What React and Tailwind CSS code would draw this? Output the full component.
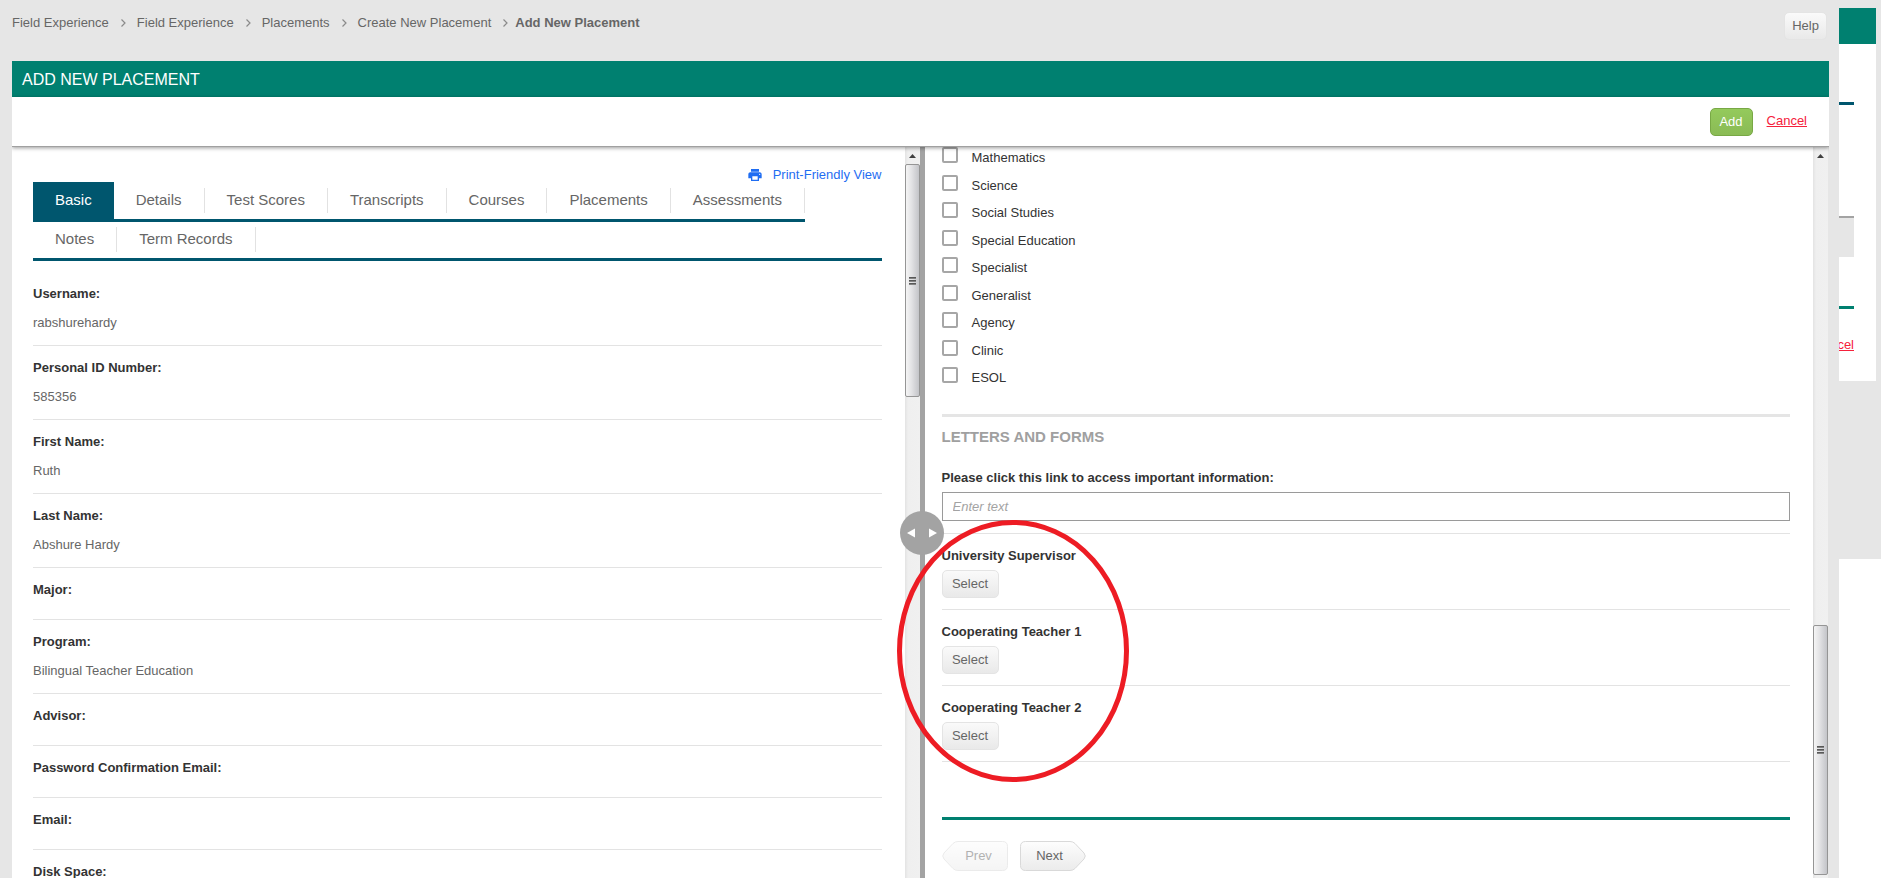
import React, { useState } from 'react'
import { MdPrint } from 'react-icons/md'

const crumbs = ['Field Experience', 'Field Experience', 'Placements', 'Create New Placement']

const tabRows = [
  ['Basic', 'Details', 'Test Scores', 'Transcripts', 'Courses', 'Placements', 'Assessments'],
  ['Notes', 'Term Records'],
]

const fields = [
  { label: 'Username:', value: 'rabshurehardy' },
  { label: 'Personal ID Number:', value: '585356' },
  { label: 'First Name:', value: 'Ruth' },
  { label: 'Last Name:', value: 'Abshure Hardy' },
  { label: 'Major:' },
  { label: 'Program:', value: 'Bilingual Teacher Education' },
  { label: 'Advisor:' },
  { label: 'Password Confirmation Email:' },
  { label: 'Email:' },
  { label: 'Disk Space:' },
]

const subjects = [
  'Mathematics',
  'Science',
  'Social Studies',
  'Special Education',
  'Specialist',
  'Generalist',
  'Agency',
  'Clinic',
  'ESOL',
]

const people = ['University Supervisor', 'Cooperating Teacher 1', 'Cooperating Teacher 2']

function Chevron() {
  return (
    <svg width="5" height="8" viewBox="0 0 5 8" fill="none" stroke="#8a8a8a" strokeWidth="1.2">
      <path d="M0.5 0.5 L4 4 L0.5 7.5" />
    </svg>
  )
}

function Breadcrumbs() {
  return (
    <nav className="flex items-center text-[#666]">
      {crumbs.map((crumb, i) => (
        <React.Fragment key={i}>
          <a href="#">{crumb}</a>
          <span className={i === crumbs.length - 1 ? 'pl-3 pr-[7px]' : 'pl-3 pr-[11px]'}>
            <Chevron />
          </span>
        </React.Fragment>
      ))}
      <span className="font-bold">Add New Placement</span>
    </nav>
  )
}

function GrayButton({ children, className = '', ...props }) {
  return (
    <button
      className={`h-7 rounded-[5px] border border-[#e4e4e4] bg-linear-to-b from-[#fafafa] to-[#e9e9e9] text-[#666] ${className}`}
      {...props}
    >
      {children}
    </button>
  )
}

function ScrollTrack({ thumb }) {
  return (
    <div className="w-[15px] shrink-0 h-full flex flex-col bg-linear-to-r from-[#e3e3e3] via-[#efefef] via-20% to-[#f0f0f0]">
      <div className="h-[17px] shrink-0 flex items-center justify-center">
        <svg width="7" height="4" viewBox="0 0 7 4" fill="#404040">
          <path d="M3.5 0 L7 4 L0 4 Z" />
        </svg>
      </div>
      <div
        className={`${thumb} flex flex-col items-center justify-center gap-px rounded-xs border border-[#959595] bg-linear-to-r from-[#f5f5f5] via-[#e4e4e6] via-40% to-[#c3c4c8]`}
      >
        <span className="w-[7px] h-0.5 bg-linear-to-b from-[#444] to-[#999]" />
        <span className="w-[7px] h-0.5 bg-linear-to-b from-[#444] to-[#999]" />
        <span className="w-[7px] h-0.5 bg-linear-to-b from-[#444] to-[#999]" />
      </div>
    </div>
  )
}

function Tabs() {
  const [active, setActive] = useState('Basic')

  return (
    <div>
      {tabRows.map((row, i) => (
        <div
          key={i}
          className={`flex items-end border-b-3 border-[#00566e] text-[15px] ${i === 0 ? 'w-fit h-10' : 'h-[39px]'}`}
        >
          {row.map((tab) => (
            <button
              key={tab}
              onClick={() => setActive(tab)}
              className={
                tab === active
                  ? 'h-full px-[22px] bg-[#00566e] text-white'
                  : 'h-[25px] mb-1.5 px-[22px] border-r border-[#e2e2e2] text-[#666]'
              }
            >
              {tab}
            </button>
          ))}
        </div>
      ))}
    </div>
  )
}

function StudentPanel() {
  return (
    <section className="w-[calc(50%-1px)] flex bg-white">
      <div className="flex-1 overflow-hidden pl-[21px] pr-[23px] pt-5">
        <a href="#" className="h-[15px] flex items-center justify-end gap-2.5 leading-5 text-[#1f6df2]">
          <MdPrint className="size-4" />
          Print-Friendly View
        </a>
        <Tabs />
        <dl className="pt-[11px]">
          {fields.map((field) => (
            <div
              key={field.label}
              className={`pt-3 border-b border-[#e3e3e3] ${field.value ? 'pb-3' : 'pb-[19px]'}`}
            >
              <dt className="font-bold text-[#333] leading-5">{field.label}</dt>
              {field.value && <dd className="mt-[9px] text-[#666] leading-5">{field.value}</dd>}
            </div>
          ))}
        </dl>
      </div>
      <ScrollTrack thumb="h-[233px]" />
    </section>
  )
}

function StepButton({ direction, disabled }) {
  const prev = direction === 'prev'
  return (
    <button
      disabled={disabled}
      className={`relative w-[66px] h-[30px] text-[#666] ${disabled ? 'opacity-50' : ''} ${prev ? 'pl-2' : 'pr-1.5'}`}
    >
      <svg
        className={`absolute inset-0 ${prev ? '-scale-x-100' : ''}`}
        width="66"
        height="30"
        viewBox="0 0 66 30"
      >
        <defs>
          <linearGradient id={`step-${direction}`} x1="0" y1="0" x2="0" y2="1">
            <stop offset="0" stopColor="#fdfdfd" />
            <stop offset="1" stopColor="#ebebeb" />
          </linearGradient>
        </defs>
        <path
          d="M5.5 0.5 H50 Q53 0.5 55 2.5 L64 12 Q66.5 15 64 18 L55 27.5 Q53 29.5 50 29.5 H5.5 Q0.5 29.5 0.5 24.5 V5.5 Q0.5 0.5 5.5 0.5 Z"
          fill={`url(#step-${direction})`}
          stroke="#d9d9d9"
        />
      </svg>
      <span className="relative">{prev ? 'Prev' : 'Next'}</span>
    </button>
  )
}

function SplitHandle() {
  return (
    <div className="relative w-[5px] shrink-0 bg-[#a3a3a3]">
      <button
        aria-label="Resize panels"
        className="absolute z-10 top-[364px] -left-5 size-11 rounded-full bg-[#a3a3a3] flex items-center justify-center"
      >
        <svg width="30" height="10" viewBox="0 0 30 10" fill="#fff">
          <path d="M8 0.5 V9.5 L0 5 Z M22 0.5 V9.5 L30 5 Z" />
        </svg>
      </button>
    </div>
  )
}

function PlacementForm() {
  return (
    <section className="relative flex-1 flex bg-white">
      <form className="flex-1 overflow-hidden pl-[17px] pr-[23px]" onSubmit={(e) => e.preventDefault()}>
        <div className="-mt-1 pb-[23px]">
          {subjects.map((subject) => (
            <label key={subject} className="h-7 even:h-[27px] flex items-start gap-3.5 text-[#333]">
              <input
                type="checkbox"
                className="appearance-none mt-1 size-4 rounded-xs border-2 border-[#a6a6a6] bg-white"
              />
              <span className="mt-[5px] leading-5">{subject}</span>
            </label>
          ))}
        </div>

        <div className="border-t-3 border-[#e5e5e5] pt-2.5">
          <h2 className="text-[15px] leading-5 font-bold text-[#a0a0a0]">LETTERS AND FORMS</h2>
        </div>

        <div className="pt-[21px] pb-3 border-b border-[#e3e3e3] text-[#333]">
          <label htmlFor="info-link" className="block leading-5 font-bold">
            Please click this link to access important information:
          </label>
          <input
            id="info-link"
            type="text"
            placeholder="Enter text"
            className="mt-1 block w-full h-[29px] px-2.5 border border-[#9a9a9a] placeholder:italic placeholder:text-[#a3a3a3]"
          />
        </div>

        {people.map((person, i) => (
          <div key={person} className="pt-3 pb-[11px] border-b border-[#e3e3e3]">
            <label htmlFor={`person-${i}`} className="block leading-5 font-bold text-[#333]">
              {person}
            </label>
            <GrayButton id={`person-${i}`} type="button" className="mt-1 w-[57px] block">
              Select
            </GrayButton>
          </div>
        ))}

        <div className="mt-[55px] border-t-3 border-[#008070] pt-[21px] flex gap-3">
          <StepButton direction="prev" disabled />
          <StepButton direction="next" />
        </div>
      </form>
      <ScrollTrack thumb="mt-auto mb-[3px] h-[250px]" />
      <div className="w-px bg-[#e6e6e6]" />

      {/* highlight around the people pickers */}
      <svg
        className="absolute z-20 top-[373px] -left-7 pointer-events-none"
        width="232"
        height="262"
        viewBox="0 0 232 262"
        fill="none"
      >
        <ellipse cx="116" cy="131" rx="113.5" ry="128.5" stroke="#ed1c24" strokeWidth="5" />
      </svg>
    </section>
  )
}

// sliver of the page that sits behind the dialog
function PageBehind() {
  return (
    <aside className="w-[42px] shrink-0 pt-2 flex flex-col">
      <div className="w-[37px] h-9 bg-[#008070]" />
      <div className="w-[37px] h-[337px] bg-white">
        <div className="w-[15px] overflow-hidden">
          <div className="mt-[58px] h-[3px] bg-[#00566e]" />
          <div className="mt-[111px] h-[41px] border-t-2 border-[#a3a3a3] bg-[#e6e6e6]" />
          <div className="mt-[49px] h-[3px] bg-[#008070]" />
          <a href="#" className="mt-[26px] flex justify-end leading-5 text-[#f5213b] underline">
            cel
          </a>
        </div>
      </div>
      <div className="mt-[178px] flex-1 bg-white" />
    </aside>
  )
}

export default function App() {
  return (
    <div className="h-screen w-full flex overflow-hidden bg-[#e6e6e6] text-[13px] font-['Liberation_Sans',Arial,sans-serif]">
      <div className="flex-1 flex flex-col pl-3 pr-2.5">
        <div className="h-[61px] shrink-0 flex items-start justify-between pt-3 pr-0.5">
          <div className="h-[22px] flex items-center">
            <Breadcrumbs />
          </div>
          <GrayButton className="w-[43px]">Help</GrayButton>
        </div>

        <main className="flex-1 min-h-0 flex flex-col overflow-hidden">
          <h1 className="h-9 shrink-0 flex items-center px-2.5 pt-px bg-[#008070] text-white text-base">
            ADD NEW PLACEMENT
          </h1>
          <div className="relative z-10 h-[50px] shrink-0 flex items-start justify-end gap-3.5 pt-[11px] pr-[22px] bg-white border-b border-[#a0a0a0] shadow-[0_1px_4px_rgba(0,0,0,0.4)]">
            <button className="w-[43px] h-7 rounded-[5px] border border-[#78a845] bg-linear-to-b from-[#94ca5c] to-[#8abb55] text-white">
              Add
            </button>
            <a href="#" className="mt-[3px] leading-5 text-[#f5213b] underline">
              Cancel
            </a>
          </div>
          <div className="flex-1 min-h-0 flex">
            <StudentPanel />
            <SplitHandle />
            <PlacementForm />
          </div>
        </main>
      </div>
      <PageBehind />
    </div>
  )
}
